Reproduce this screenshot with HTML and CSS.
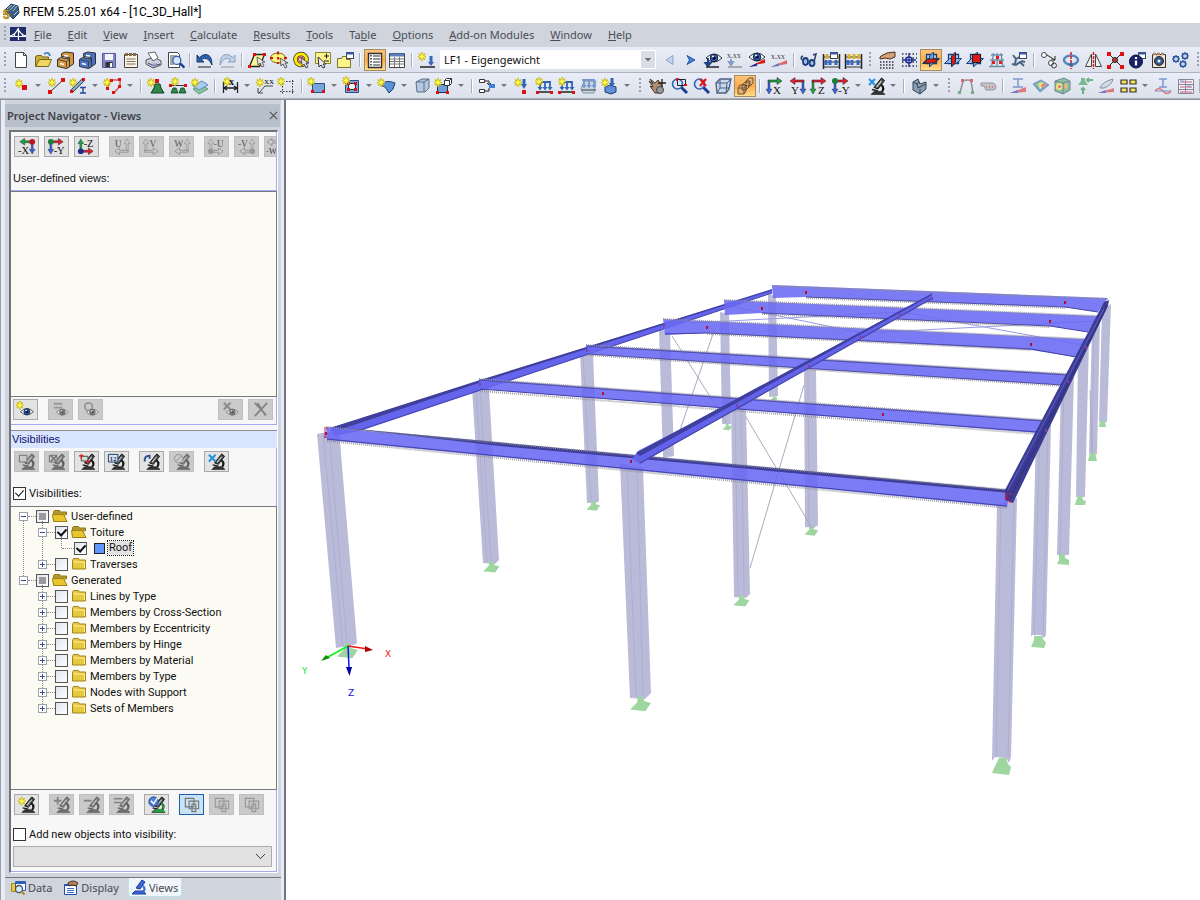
FILE: index.html
```html
<!DOCTYPE html>
<html lang="en">
<head>
<meta charset="utf-8">
<title>RFEM 5.25.01 x64 - [1C_3D_Hall*]</title>
<link rel="stylesheet" href="styles.css">
</head>
<body>
<svg class="defs" aria-hidden="true">
  <defs>
    <g id="star"><path d="M4 0v9M0 4.500h8M1 1.500l6 6M7 1.500l-6 6" stroke="#cdbd10" stroke-width="1.500"/><path d="M4 1.500l1 2 2 1-2 1-1 2-1-2-2-1 2-1z" fill="#ffff58"/></g>
    <g id="ar-r"><path d="M3 4h9V1.500l5 3.500-5 3.500V6H3z" stroke="#222" stroke-width=".5"/></g>
    <g id="ar-l"><path d="M17 4H8V1.500L3 5l5 3.500V6h9z" stroke="#222" stroke-width=".5"/></g>
    <g id="ar-dl"><path d="M3 5v8H1l3 5 3-5H5V5z" stroke="#222" stroke-width=".4"/></g>
    <g id="ar-dr"><path d="M15 5v8h-2l3 5 3-5h-2V5z" stroke="#222" stroke-width=".4"/></g>
    <g id="ar-ul"><path d="M3 15V7H1l3-5 3 5H5v8z" stroke="#222" stroke-width=".4"/></g>
    <g id="ar-ur"><path d="M15 15V7h-2l3-5 3 5h-2v8z" stroke="#222" stroke-width=".4"/></g>
    <g id="mic"><path d="M8 11.500L15.500 2l3 2.500L12 13z" fill="#4a4a4a" stroke="#151515"/><path d="M10.500 11l5-6" stroke="#d0d0d0" stroke-width="1.200"/><path d="M15 8.500q4 3.500 1 7" stroke="#151515" stroke-width="2.200"/><path d="M6 13.500l6 1.500" stroke="#222" stroke-width="1.500"/><path d="M5 18.500l3-3h8l3 3z" fill="#333" stroke="#151515" stroke-width=".6"/></g>
    <g id="eye"><path d="M2 11q8-8 16 0-8 8-16 0z" fill="#fff" stroke="#333"/><circle cx="10" cy="11" r="3.800" fill="#2b5bb8" stroke="#123"/><circle cx="10" cy="11" r="1.600" fill="#001"/><circle cx="9" cy="9.500" r="1" fill="#fff"/></g>
    <g id="lens"><path d="M12 11l6 6" stroke="#1b3f96" stroke-width="3"/><circle cx="8.500" cy="8" r="5" fill="#d8e6fb" stroke="#3560b0" stroke-width="1.600"/></g>
    <g id="win"><rect x="11.500" y="2.500" width="7" height="6" fill="#fff" stroke="#445"/><path d="M11 3.500h8" stroke="#3a5aa8" stroke-width="2"/></g>
    <g id="loads"><path d="M4 6h13M6 6v6M11 6v6M16 6v6" stroke="#3264b4" stroke-width="1.800"/><path d="M3.500 11h5L6 14.500zM8.500 11h5L11 14.500zM13.500 11h5L16 14.500z" fill="#3264b4"/><path d="M3 16h15" stroke="#222" stroke-width="1.500"/></g>
    <g id="folder"><path d="M1.500 3.500l1-2h5l1 1.500h6v9h-13z" fill="#e8c93e" stroke="#a08420"/><path d="M2.500 5h11v6" stroke="#fff2a0"/></g>
    <g id="folder-open"><path d="M1.500 11.500v-9l1-1h5l1 1.500h6v3" fill="#b39a2c" stroke="#8d7418"/><path d="M1.500 12.500L.5 5.500h11l3.500 7z" fill="#e6c52d" stroke="#9c8018"/></g>
    <g id="drawer"><path d="M2.500 9.500l3-2 9 1.500v8l-3 1.500-9-2z" stroke="#333"/><path d="M6.500 3.500l4-1.500 8 1v11l-4 2.500V7.500l-8-1z" stroke="#333"/><path d="M2.500 9.500l9 2v6M11.500 11.500l3-2.500" stroke="#333" stroke-width=".8"/><path d="M5 13.500l4 1M9 5.500l4 .6" stroke="#fff" stroke-width="1.500"/></g>
    <g id="abacus"><path d="M2.500 4v15M18.500 4v15" stroke="#222" stroke-width="1.500"/><path d="M2 7h17M2 12h17M2 17h17" stroke="#333"/><path d="M6 4v5M11 4v5M16 4v5" stroke="#d9b428" stroke-width="3"/><path d="M5 10v5M9 10v5M15 10v5" stroke="#3764c4" stroke-width="3"/></g>
    <g id="plane"><path d="M5.500 4.500h10v9h-10z" fill="#b9d4f2" stroke="#1b3e78" stroke-width="1.300"/><path d="M1.500 13.500l5-5h12l-5 5z" fill="#8ab6e4" stroke="#1b3e78"/><path d="M8.500 6l4-4v11l-4 4z" fill="#6da3da" stroke="#1b3e78"/></g>
    <g id="rects"><path d="M3.500 3.500h9v9h-9zM7.500 6.500h10v8h-10zM10.500 9.500h4v8h-4z" stroke="#77776f" stroke-width="1.200"/></g>
    <g id="gear"><circle r="3.200" stroke="#31589c" stroke-width="1.800" fill="#c3d7f3"/><path d="M0-5v10M-5 0H5M-3.500-3.500l7 7M3.500-3.500l-7 7" stroke="#31589c" stroke-width="1.500" stroke-dasharray="1.500 7"/></g>
    <g id="support"><path d="M-3-8h6l2 5 7 2-6 9-17-2 6-6 2-2z" fill="#9fd69f"/></g>
  </defs>
</svg>

<header class="titlebar">
  <svg class="logo" viewBox="0 0 18 18"><path d="M3 7l6-6 7 2 1 7-6 6z" fill="#3c5f80" stroke="#24405c"/><path d="M5 6l5-4M8 7l5-5M11 8l4-5M12 12l4-4" stroke="#a9c3d8"/><text x="1" y="16" class="five">5</text></svg>
  <h1>RFEM 5.25.01 x64 - [1C_3D_Hall*]</h1>
</header>

<nav class="menubar">
  <i class="grip"></i>
  <svg class="appicon" viewBox="0 0 16 14"><path d="M0 0h16v14H0z" fill="#202c6a"/><path d="M0 9.500h16M8.500 1v12M0 9q5-1 8-7 3 6 8 7M4.500 6.500v3M12.500 6.500v3" stroke="#fff" stroke-width="1.200"/></svg>
  <a href="#"><u>F</u>ile</a><a href="#"><u>E</u>dit</a><a href="#"><u>V</u>iew</a><a href="#"><u>I</u>nsert</a><a href="#"><u>C</u>alculate</a><a href="#"><u>R</u>esults</a><a href="#"><u>T</u>ools</a><a href="#">Ta<u>b</u>le</a><a href="#"><u>O</u>ptions</a><a href="#"><u>A</u>dd-on Modules</a><a href="#"><u>W</u>indow</a><a href="#"><u>H</u>elp</a>
</nav>

<div class="toolbar">
  <i class="grip"></i>
  <button class="tool" aria-label="New"><svg viewBox="0 0 20 20"><path d="M4.500 2.500h8l3 3v12h-11z" fill="#fff" stroke="#444"/><path d="M12.500 2.500v3h3" stroke="#444"/></svg></button>
  <button class="tool" aria-label="Open"><svg viewBox="0 0 20 20"><path d="M2.500 16V6.500l2-1h4l1 1.500h6v2" fill="#c9ad3c" stroke="#7a641c"/><path d="M2.500 16.500l4-7h12l-3 7z" fill="#f0d661" stroke="#7a641c"/><path d="M11 4q5-3 6 2" stroke="#4f88c0" stroke-width="2"/></svg></button>
  <button class="tool" aria-label="Open project"><svg viewBox="0 0 20 20"><use href="#drawer" fill="#d9963f"/></svg></button>
  <button class="tool" aria-label="Project manager"><svg viewBox="0 0 20 20"><use href="#drawer" fill="#4a72c4"/></svg></button>
  <button class="tool" aria-label="Save"><svg viewBox="0 0 20 20"><path d="M3.500 3.500h13v14h-13z" fill="#8386c4" stroke="#55589a"/><path d="M6 4h8v6H6z" fill="#f4f4fc"/><path d="M6.500 12h7v5h-7z" fill="#333"/><path d="M11 13h2v4h-2z" fill="#fff"/></svg></button>
  <button class="tool" aria-label="Notes"><svg viewBox="0 0 20 20"><path d="M3.500 4.500h13v13h-13z" fill="#fdf3dc" stroke="#444"/><path d="M4 4.500h12" stroke="#8a6a48" stroke-width="3" stroke-dasharray="3 1"/><path d="M5.500 9h9M5.500 11.500h9M5.500 14h9" stroke="#777"/></svg></button>
  <button class="tool" aria-label="Print"><svg viewBox="0 0 20 20"><path d="M3 10l8-3 7 4v4l-8 3-7-4z" fill="#ccd0dc" stroke="#555"/><path d="M5 3l7-1 3 6-5 3z" fill="#fff" stroke="#666"/><path d="M5 13l6 3 6-2" stroke="#444"/><path d="M9 14l5-1v2l-4 2z" fill="#88a0d8"/></svg></button>
  <button class="tool" aria-label="Print preview"><svg viewBox="0 0 20 20"><path d="M3.500 2.500h9l2 2v13h-11z" fill="#fff" stroke="#444"/><path d="M5 6h7M5 8h5M5 10h4M5 12h3M5 14h4" stroke="#555"/><use href="#lens" transform="translate(5 4) scale(.8)"/></svg></button>
  <i class="sep"></i>
  <button class="tool" aria-label="Undo"><svg viewBox="0 0 20 20"><path d="M2 5v7h7l-3-2.500q7-4 11 5.500Q17 4 10 4.500 7 5 4.500 7.500z" fill="#2d5fae" stroke="#163a70"/><path d="M3 17h13" stroke="#222"/></svg></button>
  <button class="tool" aria-label="Redo"><svg viewBox="0 0 20 20"><path d="M18 5v7h-7l3-2.500Q7 5.500 3 15 3 4 10 4.500q3 .5 5.500 3z" fill="#c1d3e8" stroke="#8ba0bb"/><path d="M4 17h13" stroke="#999"/></svg></button>
  <i class="sep"></i>
  <button class="tool" aria-label="Select by polygon"><svg viewBox="0 0 20 20"><path d="M2.500 16.500l5-12h10l-5 12z" fill="#fbf39a" stroke="#222" stroke-width="1.300"/><path d="M1 15h3v3H1zM6 3h3v3H6zM16 3h3v3h-3z" fill="#e01010"/><path d="M10 7l1 8 2-2 2 4 2-1-2-4h3z" fill="#e8e8e8" stroke="#444" stroke-width=".8"/></svg></button>
  <button class="tool" aria-label="Select by ellipse"><svg viewBox="0 0 20 20"><ellipse cx="9" cy="8" rx="7.500" ry="5" fill="#fdf480" stroke="#776c20"/><path d="M9 1.500v3M9 7v2.500M9 12v2M1 8h3M15 8h3" stroke="#e01010" stroke-width="2"/><path d="M11 8l1 8 2-2 2 4 2-1-2-4h3z" fill="#ddd" stroke="#444" stroke-width=".8"/></svg></button>
  <button class="tool" aria-label="Select by ring"><svg viewBox="0 0 20 20"><circle cx="10" cy="9.500" r="5.500" stroke="#333" stroke-width="4.500"/><circle cx="10" cy="9.500" r="5.500" stroke="#ffe800" stroke-width="3"/><circle cx="10" cy="9.500" r="2.500" stroke="#e01010"/><path d="M10 8l1 8 2-2 2 4 2-1-2-4h3z" fill="#ddd" stroke="#333" stroke-width=".8"/></svg></button>
  <button class="tool" aria-label="Special selection"><svg viewBox="0 0 20 20"><path d="M2.500 2.500h15v11h-15z" fill="#fdf48a" stroke="#8a8430"/><path d="M11 6h5M13.500 3.500v5M11 11h5" stroke="#222"/><path d="M5 7l1 10 2-2 2 3 2-1-2-3h3z" fill="#eee" stroke="#333"/></svg></button>
  <button class="tool" aria-label="New window"><svg viewBox="0 0 20 20"><path d="M2.500 8.500h4l1-2h4v3h4v8h-13z" fill="#fdf48a" stroke="#777430"/><use href="#win"/></svg></button>
  <i class="sep"></i>
  <button class="tool on" aria-label="Navigator" aria-pressed="true"><svg viewBox="0 0 20 20"><path d="M3.500 3.500h13v14h-13z" fill="#fff" stroke="#333" stroke-width="1.400"/><path d="M6 5v11" stroke="#333" stroke-width="1.500" stroke-dasharray="1.500 1.500"/><path d="M8 6h7M8 9h7M8 12h7M8 15h7" stroke="#333" stroke-width="1.200"/></svg></button>
  <button class="tool" aria-label="Tables"><svg viewBox="0 0 20 20"><path d="M2.500 3.500h15v14h-15z" fill="#fff" stroke="#444"/><path d="M3 5h14" stroke="#5b7fbd" stroke-width="3"/><path d="M3 9h14M3 11.500h14M3 14h14M7.500 7v10M12.500 7v10" stroke="#777"/></svg></button>
  <i class="sep"></i>
  <button class="tool" aria-label="New load case"><svg viewBox="0 0 20 20"><use href="#star" x="1" y="2"/><path d="M14 6v7" stroke="#3568b8" stroke-width="3"/><path d="M11 12h6l-3 4z" fill="#3568b8"/><path d="M3 17h15" stroke="#222" stroke-width="1.500"/></svg></button>
  <select class="loadcase" aria-label="Load case"><option>LF1 - Eigengewicht</option></select>
  <button class="tool" aria-label="Previous"><svg viewBox="0 0 20 20"><path d="M14 5.500v9L7 10z" fill="#c6d4ea" stroke="#8ba3cc"/></svg></button>
  <button class="tool" aria-label="Next"><svg viewBox="0 0 20 20"><path d="M6 5.500L14 10l-8 4.500 2.500-4.500z" fill="#4a80d0" stroke="#2356a8"/></svg></button>
  <button class="tool" aria-label="Show loads"><svg viewBox="0 0 20 20"><use href="#eye" transform="translate(1 -3)"/><path d="M5 8v6M2.500 13l2.500 3 2.500-3z" stroke="#1b3f8a" stroke-width="2"/><path d="M3 17h13" stroke="#222" stroke-width="1.500"/></svg></button>
  <button class="tool off" aria-label="Load values"><svg viewBox="0 0 20 20"><text x="2" y="8" class="t8">x.xx</text><path d="M6 9v4M4 12l2 3 2-3z" stroke="#4a6ab0" stroke-width="2"/><path d="M3 17h14" stroke="#222"/></svg></button>
  <button class="tool" aria-label="Show results"><svg viewBox="0 0 20 20"><path d="M2 17l16-8v4l-6 1z" fill="#e01818"/><path d="M2 17l8-4v3z" fill="#1b2fa8"/><use href="#eye" transform="translate(0 -4)"/></svg></button>
  <button class="tool off" aria-label="Result values"><svg viewBox="0 0 20 20"><text x="2" y="9" class="t8">x.xx</text><path d="M2 17l16-7v4l-6 1z" fill="#e01818"/><path d="M2 17l8-4v3z" fill="#1b2fa8"/></svg></button>
  <i class="sep"></i>
  <button class="tool" aria-label="Results glasses"><svg viewBox="0 0 20 20"><ellipse cx="6.500" cy="11.500" rx="2.500" ry="3.500" stroke="#1b3d80" stroke-width="1.800" fill="#a9c0e4"/><ellipse cx="13" cy="13" rx="2.500" ry="3" stroke="#1b3d80" stroke-width="1.800" fill="#a9c0e4"/><path d="M3 10Q1 7 4 6M15 12l2-8-3 1" stroke="#27406e" stroke-width="1.500"/></svg></button>
  <button class="tool" aria-label="Calculation parameters"><svg viewBox="0 0 20 20"><use href="#abacus"/><use href="#win" x="-2"/></svg></button>
  <button class="tool" aria-label="Calculate all"><svg viewBox="0 0 20 20"><use href="#abacus"/></svg></button>
  <i class="grip next"></i>
  <button class="tool" aria-label="Work plane"><svg viewBox="0 0 20 20"><path d="M4 6l6-3 8-1v5l-5 2-5-1-5 1V7z" fill="#d6a077" stroke="#4a3020"/><path d="M3 12h15M3 15h15M3 18h15" stroke="#333" stroke-width="1.300" stroke-dasharray="1.500 1.500"/></svg></button>
  <button class="tool" aria-label="Grid"><svg viewBox="0 0 20 20"><path d="M3 4h15M3 8h15M3 12h15M3 16h15" stroke="#333" stroke-width="1.500" stroke-dasharray="1.500 2"/><circle cx="10" cy="10" r="3" fill="#fff" stroke="#1c2c90" stroke-width="1.500"/><path d="M10 3v14M3 10h14" stroke="#1c2c90" stroke-width="1.300"/></svg></button>
  <button class="tool on" aria-label="Plane XY" aria-pressed="true"><svg viewBox="0 0 20 20"><use href="#plane"/><path d="M3 13l4-4h10l-4 4z" fill="#e01818" stroke="#222" stroke-width=".8"/></svg></button>
  <button class="tool" aria-label="Plane YZ"><svg viewBox="0 0 20 20"><use href="#plane"/><path d="M8.500 7l4-4v9l-4 4z" fill="#e01818" stroke="#222" stroke-width=".8"/></svg></button>
  <button class="tool" aria-label="Plane XZ"><svg viewBox="0 0 20 20"><use href="#plane"/><path d="M7.500 4.500h8v8h-8z" fill="#e01818" stroke="#222"/></svg></button>
  <button class="tool" aria-label="Guidelines"><svg viewBox="0 0 20 20"><path d="M6.500 3l-2 14M10 3v14M14 3l2 14M4 5h12M3 10h14M2 16.500h16" stroke="#6c90a8" stroke-width="1.300"/><path d="M9 6h3v3H9zM5 11h3v3H5zM12 11h3v3h-3z" fill="#e02020"/></svg></button>
  <button class="tool" aria-label="Background layers"><svg viewBox="0 0 20 20"><path d="M4 5l3 4 4-2M7 9l-1 5M3 14l4 1 4-3 4 4M12 11l4 1" stroke="#4a6488" stroke-width="2"/><use href="#win" x="-1"/></svg></button>
  <i class="sep"></i>
  <button class="tool" aria-label="Move"><svg viewBox="0 0 20 20"><circle cx="5" cy="5" r="2.500" stroke="#444" fill="#fff"/><path d="M8 5l8 5M16 6v4h-4" stroke="#222"/><circle cx="12" cy="13" r="2.500" stroke="#444" fill="#fff"/><circle cx="15" cy="15.500" r="2.500" stroke="#444"/></svg></button>
  <button class="tool" aria-label="Rotate"><svg viewBox="0 0 20 20"><ellipse cx="10" cy="10" rx="7" ry="4.500" stroke="#5a84b8" stroke-width="2.500"/><path d="M10 2v17" stroke="#e01818" stroke-width="1.500" stroke-dasharray="3 1"/><path d="M11 12l-4 3 5 2z" fill="#35689e"/></svg></button>
  <button class="tool" aria-label="Mirror"><svg viewBox="0 0 20 20"><path d="M8.500 4v12.500h-6zM12.500 4v12.500h6z" stroke="#444" fill="#eee"/><path d="M10.500 2v17" stroke="#e01818" stroke-width="1.500" stroke-dasharray="3 1"/></svg></button>
  <button class="tool" aria-label="Scale"><svg viewBox="0 0 20 20"><path d="M4 4l12 12M16 4L4 16" stroke="#222"/><circle cx="10" cy="10" r="2.500" fill="#b33" stroke="#222"/><path d="M2 2h4v4H2zM15 2h4v4h-4zM2 15h4v4H2zM15 15h4v4h-4z" fill="#e01010"/></svg></button>
  <button class="tool" aria-label="Info"><svg viewBox="0 0 20 20"><use href="#win"/><circle cx="9" cy="11.500" r="6.500" fill="#18246a" stroke="#080c30"/><path d="M9 7v2M9 10.500v5" stroke="#fff" stroke-width="2.200"/></svg></button>
  <button class="tool" aria-label="Camera"><svg viewBox="0 0 20 20"><path d="M3.500 4.500h13v13h-13z" fill="#f4e5cf" stroke="#333"/><path d="M4 4h12" stroke="#a98a68" stroke-width="2.500" stroke-dasharray="3 1"/><circle cx="10" cy="11" r="4.500" fill="#31588a" stroke="#223"/><circle cx="10" cy="11" r="1.500" fill="#fff"/></svg></button>
  <button class="tool" aria-label="Settings"><svg viewBox="0 0 20 20"><use href="#gear" transform="translate(5 9) scale(.8)"/><use href="#gear" transform="translate(14 6) scale(.8)"/><use href="#gear" transform="translate(12 14) scale(.8)"/></svg></button>
  <i class="grip next"></i>
</div>

<div class="toolbar">
  <i class="grip"></i>
  <button class="tool split" aria-label="Node"><svg viewBox="0 0 20 20"><use href="#star" x="4" y="3"/><path d="M11 9h5v5h-5z" fill="#d81010"/></svg></button>
  <button class="tool" aria-label="Line"><svg viewBox="0 0 20 20"><path d="M4 16L17 4" stroke="#333"/><path d="M2 14h4v4H2zM15 2h4v4h-4z" fill="#e01010"/><use href="#star" x="2" y="2"/></svg></button>
  <button class="tool split" aria-label="Member"><svg viewBox="0 0 20 20"><path d="M4 15L15 4" stroke="#333" stroke-width="3.500"/><path d="M4 15L15 4" stroke="#8ab4e4" stroke-width="2"/><path d="M2 14h3v3H2zM14 2h3v3h-3z" fill="#e01010"/><use href="#star" x="1" y="2"/><path d="M12 11.500h6M15 11v6M12 17h6" stroke="#234a98" stroke-width="1.400"/></svg></button>
  <button class="tool split" aria-label="Polyline"><svg viewBox="0 0 20 20"><path d="M4 12l4-8h9v6l-6 7" stroke="#e05050" stroke-width="1.500"/><path d="M7 3h3v3H7zM15 2h3v3h-3zM3 11h3v3H3zM15 9h3v3h-3zM9 15h3v3H9z" fill="#e01010"/><use href="#star" x="0" y="2"/></svg></button>
  <i class="sep"></i>
  <button class="tool" aria-label="Nodal support"><svg viewBox="0 0 20 20"><path d="M9 8h5l1 4 3 5H5l3-5z" fill="#2f8a4a" stroke="#124020"/><path d="M9 3h4v4H9z" fill="#e01010"/><use href="#star" x="1" y="2"/></svg></button>
  <button class="tool" aria-label="Line support"><svg viewBox="0 0 20 20"><path d="M3 9.500h15" stroke="#333"/><path d="M5 12h3l2 5H3zM13 12h3l2 5h-7z" fill="#2f8a4a" stroke="#124020" stroke-width=".8"/><path d="M1 8h3v3H1zM16 8h3v3h-3z" fill="#e01010"/><use href="#star" x="3" y="1"/></svg></button>
  <button class="tool" aria-label="Surface support"><svg viewBox="0 0 20 20"><path d="M3 13l6 5 9-5-6-4z" fill="#85c69a" stroke="#6a9a80"/><path d="M3 10l6 4 9-5-6-4z" fill="#a9cdf0" stroke="#5d89b8"/><use href="#star" x="1" y="2"/></svg></button>
  <i class="sep"></i>
  <button class="tool split" aria-label="Dimension"><svg viewBox="0 0 20 20"><path d="M3.500 6v11M17.500 6v11M4 12h13M7 10l-3 2 3 2M14 10l3 2-3 2" stroke="#222" stroke-width="1.300"/><use href="#star" x="3" y="1"/><text x="9" y="9" class="t10 dk">x</text></svg></button>
  <button class="tool" aria-label="Comment"><svg viewBox="0 0 20 20"><path d="M18 10h-8l-6 7M3 12v5h5" stroke="#444"/><use href="#star" x="1" y="2"/><text x="9" y="8" class="t7">XX</text></svg></button>
  <button class="tool" aria-label="Section box"><svg viewBox="0 0 20 20"><path d="M5.500 4v14M15.500 4v14M3 5.500h15M3 15.500h15" stroke="#333" stroke-dasharray="1.500 1.500"/><use href="#star" x="0" y="1"/></svg></button>
  <i class="sep"></i>
  <button class="tool split" aria-label="Surface"><svg viewBox="0 0 20 20"><path d="M5.500 7.500h12v9h-12z" fill="#78a5da" stroke="#2b4f80"/><path d="M4 14h3v3H4zM15 14h3v3h-3z" fill="#e01010"/><use href="#star" x="0" y="1"/></svg></button>
  <button class="tool split" aria-label="Opening"><svg viewBox="0 0 20 20"><path d="M3.500 4.500h13v12h-13z" fill="#78a5da" stroke="#2b4f80"/><path d="M6.500 7.500h7v6h-7z" fill="#eef" stroke="#333"/><path d="M5 6h3v3H5zM12 6h3v3h-3zM5 12h3v3H5zM12 12h3v3h-3z" fill="#d01818"/><use href="#star" x="0" y="0"/></svg></button>
  <button class="tool split" aria-label="Curved surface"><svg viewBox="0 0 20 20"><path d="M4 9q5-6 14-2-1 7-6 10Q9 10 4 9z" fill="#5b95d8" stroke="#20406e"/><use href="#star" x="0" y="2"/></svg></button>
  <button class="tool" aria-label="Solid"><svg viewBox="0 0 20 20"><path d="M4 6l6-3h7v9l-4 4H5z" fill="#b5c8e0" stroke="#5b7088"/><path d="M4 6h8l5-3M12 6v10" stroke="#5b7088"/></svg></button>
  <button class="tool split" aria-label="Copy solid"><svg viewBox="0 0 20 20"><path d="M3.500 8.500h10v8h-10z" fill="#6f9fd8" stroke="#234"/><path d="M10.500 4.500h5v5h-5zM10.500 4.500l2-2h5v5l-2 2M15.500 4.500l2-2" fill="#fff" stroke="#333"/><path d="M2 15h3v3H2zM12 15h3v3h-3z" fill="#e01010"/><use href="#star" x="0" y="2"/></svg></button>
  <i class="sep"></i>
  <button class="tool split" aria-label="Connect"><svg viewBox="0 0 20 20"><path d="M2.500 3.500h5v3h-5zM2.500 13.500h5v3h-5z" fill="#fff" stroke="#333"/><path d="M8 5h4v3M8 15h4v-3M10 7l2 2 2-2" stroke="#222"/><path d="M12 8h6v4h-6z" fill="#3f82d8"/></svg></button>
  <button class="tool" aria-label="Nodal load"><svg viewBox="0 0 20 20"><path d="M12 3v6" stroke="#3264b4" stroke-width="3"/><path d="M9 8h6l-3 5z" fill="#3264b4"/><path d="M10 14h4v4h-4z" fill="#e01010"/><use href="#star" x="2" y="2"/></svg></button>
  <button class="tool" aria-label="Line load"><svg viewBox="0 0 20 20"><use href="#loads"/><path d="M2 15h3v3H2zM16 15h3v3h-3z" fill="#e01010"/><use href="#star" x="1" y="1"/></svg></button>
  <button class="tool" aria-label="Member load"><svg viewBox="0 0 20 20"><use href="#loads"/><path d="M2 15h3v3H2zM16 15h3v3h-3z" fill="#e01010"/><use href="#star" x="2" y="1"/></svg></button>
  <button class="tool off" aria-label="Surface load"><svg viewBox="0 0 20 20"><path d="M3 13l3-8h12l-2 12H5z" fill="#b4ccdc" stroke="#467"/><use href="#loads" y="-2"/></svg></button>
  <button class="tool split" aria-label="Solid load"><svg viewBox="0 0 20 20"><path d="M5 11l5-2 6 2v5l-5 2-6-2z" fill="#5f8fd4" stroke="#1c3c70"/><path d="M12 2v6" stroke="#3264b4" stroke-width="3"/><path d="M9 7h6l-3 4z" fill="#3264b4"/><use href="#star" x="1" y="2"/></svg></button>
  <i class="grip next"></i>
  <button class="tool" aria-label="Pan"><svg viewBox="0 0 20 20"><path d="M3 3l5 4 3-3 4 6-2 7H8l-5-7 3 1-4-6 4 3z" fill="#b08c72" stroke="#4a3828"/><path d="M11 7h8M15 3v8" stroke="#222" stroke-width="1.300"/><circle cx="13" cy="14" r="3.500" fill="#999" stroke="#444"/></svg></button>
  <button class="tool" aria-label="Zoom window"><svg viewBox="0 0 20 20"><use href="#lens"/><path d="M8.500 3.500h8v6h-8z" stroke="#222"/><path d="M7 2h2v3H7zM15 8h3v2h-3z" fill="#e01010"/></svg></button>
  <button class="tool" aria-label="Zoom all"><svg viewBox="0 0 20 20"><use href="#lens"/><path d="M9 3l6 7M15 3l-6 7" stroke="#e01818" stroke-width="2.200"/></svg></button>
  <button class="tool" aria-label="Wireframe"><svg viewBox="0 0 20 20"><path d="M3 7l4-4h11l-2 10-3 4H4z" fill="#c8d8ee" stroke="#4c6280" stroke-width="1.300"/><path d="M3 7h11l4-4M14 7l-1 10M7 3v9h9M7 12l-3 5" stroke="#4c6280"/></svg></button>
  <button class="tool on" aria-label="Solid display" aria-pressed="true"><svg viewBox="0 0 20 20"><path d="M11 5l3-3h4v5l-3 3h-4zM7 9l3-3h4v5l-3 3H7zM3 12l2-3h6v6l-2 3H3z" fill="#f2b264" stroke="#665540"/><path d="M3 12h6v6M9 12l2-3M7 9h4v5M11 5h4v5" stroke="#665540"/></svg></button>
  <i class="sep"></i>
  <button class="tool" aria-label="View X"><svg viewBox="0 0 20 20"><use href="#ar-dl" fill="#3a62e0"/><use href="#ar-r" fill="#20a040"/><text x="8" y="18" class="t11">X</text></svg></button>
  <button class="tool" aria-label="View Y"><svg viewBox="0 0 20 20"><use href="#ar-dr" fill="#3a62e0"/><use href="#ar-l" fill="#e02030"/><text x="4" y="18" class="t11">Y</text></svg></button>
  <button class="tool" aria-label="View Z"><svg viewBox="0 0 20 20"><use href="#ar-dl" fill="#20a040"/><use href="#ar-r" fill="#e02030"/><text x="9" y="18" class="t11">Z</text></svg></button>
  <button class="tool split" aria-label="View -Y"><svg viewBox="0 0 20 20"><use href="#ar-dl" fill="#3a62e0"/><use href="#ar-r" fill="#e02030"/><circle cx="4" cy="5" r="3" fill="#18803a"/><text x="7" y="18" class="t11">-Y</text></svg></button>
  <button class="tool split" aria-label="Visibility mode"><svg viewBox="0 0 20 20"><use href="#mic"/><path d="M3 3l6 6M9 3L3 9" stroke="#2590e0" stroke-width="2"/></svg></button>
  <i class="sep"></i>
  <button class="tool split" aria-label="Render"><svg viewBox="0 0 20 20"><path d="M4 6l5-3 2 5 6-2v7l-6 5-7-4z" fill="#8a9db0" stroke="#34465a"/><path d="M4 6l4 2 1 4 8-4M8 8l2-2M11 13v5" stroke="#34465a"/></svg></button>
  <i class="grip next"></i>
  <button class="tool dim" aria-label="Deformation"><svg viewBox="0 0 20 20"><path d="M4 17L7 5q5-2 8 0l2 12" stroke="#555" stroke-width="1.500"/><path d="M5 3h3v3H5zM14 3h3v3h-3z" fill="#d01818"/><path d="M2 15h3v3H2zM15 15h3v3h-3z" fill="#2a8a3c"/></svg></button>
  <button class="tool dim" aria-label="Tape"><svg viewBox="0 0 20 20"><path d="M3 7h12q3 1 3 4t-3 3H8L6 10H3z" fill="#aaa" stroke="#666"/><path d="M8 11h1M11 11h1M14 11h1" stroke="#e03030" stroke-width="2"/></svg></button>
  <i class="sep"></i>
  <button class="tool dim" aria-label="Member results"><svg viewBox="0 0 20 20"><path d="M5 3h10M10 3v8M5 11h10" stroke="#3c64b0" stroke-width="1.500"/><path d="M2 17l16-6v5z" fill="#e03030"/><path d="M2 17l8-3v3z" fill="#2038b0"/></svg></button>
  <button class="tool dim" aria-label="Surface results"><svg viewBox="0 0 20 20"><path d="M3 8l8-4 8 5-9 7z" fill="#3070d0" stroke="#3060a0"/><path d="M5 8l6-3 6 4-7 5z" fill="#40b060"/><path d="M8 8l4-2 4 3-6 4z" fill="#f0e040"/><path d="M11 9l3-2 2 2-4 3z" fill="#e84020"/></svg></button>
  <button class="tool dim" aria-label="Solid results"><svg viewBox="0 0 20 20"><path d="M3 5l9-3 6 3v9l-7 4-8-3z" fill="#50a860" stroke="#246"/><circle cx="7.500" cy="10.500" r="3.500" fill="#f0e040"/><circle cx="7.500" cy="10.500" r="1.500" fill="#e03020"/><ellipse cx="14" cy="10" rx="1.500" ry="3" fill="#f0a030"/><path d="M3 5l8 2 7-2M11 7v11" stroke="#246"/></svg></button>
  <button class="tool dim" aria-label="Support reactions"><svg viewBox="0 0 20 20"><path d="M7 2h4v3l3 4H4l3-4z" fill="#3a9a50"/><path d="M13 4h6M15 2l-2 2 2 2M9 18v-6M7 14l2-2 2 2" stroke="#2f8a4a" stroke-width="2"/></svg></button>
  <button class="tool dim" aria-label="Sections"><svg viewBox="0 0 20 20"><path d="M4 12q2-6 13-9-1 6-9 9z" fill="#c8d4e4" stroke="#456"/><path d="M2 17l16-5v4z" fill="#e03030"/><path d="M2 17l8-3v3z" fill="#2038b0"/></svg></button>
  <button class="tool split" aria-label="Values"><svg viewBox="0 0 20 20"><path d="M3 4h6v4H3zM12 4h6v4h-6zM3 12h6v4H3zM12 12h6v4h-6z" fill="#f6e25a" stroke="#333" stroke-width="1.200"/></svg></button>
  <button class="tool dim" aria-label="Diagrams"><svg viewBox="0 0 20 20"><path d="M6 3h8M10 3v8M6 11h8" stroke="#3c64b0" stroke-width="1.500"/><path d="M2 15q4-5 8 0t8 0" stroke="#e03030" stroke-width="1.500"/><path d="M2 15h16" stroke="#35a"/></svg></button>
  <button class="tool dim" aria-label="Result table"><svg viewBox="0 0 20 20"><path d="M3.500 3.500h15v14h-15zM3.500 8.500h15M3.500 13.500h15M10.500 3.500v14" stroke="#446" fill="#fff"/><path d="M5 6h12M5 11h12M5 16h12" stroke="#d05070" stroke-width="1.500"/><path d="M5 5h4M12 10h4" stroke="#4068c0"/></svg></button>
  <i class="sep"></i>
</div>

<div class="workspace">
  <aside class="navigator">
    <div class="nav-title"><h2>Project Navigator - Views</h2><button class="close" aria-label="Close"><svg viewBox="0 0 10 10"><path d="M1 1l8 8M9 1L1 9" stroke="#555" stroke-width="1.300"/></svg></button></div>
    <div class="nav-body">
      <section class="group views">
        <div class="btnrow first">
          <button class="box" aria-label="View -X"><svg viewBox="0 0 20 20"><use href="#ar-dr" fill="#3a62e0"/><use href="#ar-l" fill="#20a040"/><circle cx="16" cy="5" r="3" fill="#c01020"/><text x="1" y="18" class="t11">-X</text></svg></button>
          <button class="box" aria-label="View -Y"><svg viewBox="0 0 20 20"><use href="#ar-dl" fill="#3a62e0"/><use href="#ar-r" fill="#e02030"/><circle cx="4" cy="5" r="3" fill="#18803a"/><text x="7" y="18" class="t11">-Y</text></svg></button>
          <button class="box" aria-label="View -Z"><svg viewBox="0 0 20 20"><use href="#ar-ul" fill="#20a040"/><use href="#ar-r" y="10" fill="#e02030"/><circle cx="4" cy="15" r="3" fill="#1a2c90"/><text x="7" y="10" class="t11">-Z</text></svg></button>
          <button class="box gap" disabled aria-label="View U"><svg viewBox="0 0 20 20"><use href="#ar-ur" fill="#ccc"/><use href="#ar-l" y="10" fill="#ccc"/><text x="3" y="10" class="t10">U</text></svg></button>
          <button class="box" disabled aria-label="View V"><svg viewBox="0 0 20 20"><use href="#ar-ul" fill="#ccc"/><use href="#ar-r" y="10" fill="#ccc"/><text x="8" y="10" class="t10">V</text></svg></button>
          <button class="box" disabled aria-label="View W"><svg viewBox="0 0 20 20"><use href="#ar-ur" fill="#ccc"/><use href="#ar-l" y="10" fill="#ccc"/><text x="2" y="10" class="t10">W</text></svg></button>
          <button class="box gap" disabled aria-label="View -U"><svg viewBox="0 0 20 20"><use href="#ar-ul" fill="#ccc"/><use href="#ar-r" y="10" fill="#ccc"/><circle cx="4" cy="15" r="3" fill="#777"/><text x="7" y="10" class="t10">-U</text></svg></button>
          <button class="box" disabled aria-label="View -V"><svg viewBox="0 0 20 20"><use href="#ar-ur" fill="#ccc"/><use href="#ar-l" y="10" fill="#ccc"/><circle cx="16" cy="15" r="3" fill="#777"/><text x="1" y="10" class="t10">-V</text></svg></button>
          <button class="box cut" disabled aria-label="View -W"><svg viewBox="0 0 12 19"><path d="M12 4H7V1.500L2 5l5 3.500V6h5" fill="#ccc" stroke="#222" stroke-width=".5"/><text x="1" y="17" class="t8">-W</text></svg></button>
        </div>
        <p class="label arial">User-defined views:</p>
      </section>
      <div class="list"></div>
      <div class="btnrow under">
        <button class="box" aria-label="New view"><svg viewBox="0 0 20 20"><use href="#eye" transform="translate(3 3) scale(.85)"/><use href="#star" x="0" y="1"/></svg></button>
        <button class="box gap" disabled aria-label="Set view"><svg viewBox="0 0 20 20"><path d="M3 4h9M3 8h9" stroke="#777" stroke-width="2"/><use href="#eye" transform="translate(4 4) scale(.8)"/></svg></button>
        <button class="box" disabled aria-label="Update view"><svg viewBox="0 0 20 20"><circle cx="8" cy="7" r="4" stroke="#777" stroke-width="2"/><use href="#eye" transform="translate(4 4) scale(.8)"/></svg></button>
        <button class="box right" disabled aria-label="Delete view"><svg viewBox="0 0 20 20"><path d="M3 3l7 7M10 3l-7 7" stroke="#666" stroke-width="2.200"/><use href="#eye" transform="translate(4 4) scale(.8)"/></svg></button>
        <button class="box" disabled aria-label="Delete all"><svg viewBox="0 0 20 20"><path d="M4 3l12 13M17 3L4 17M7 3l8 13" stroke="#555" stroke-width="1.800"/></svg></button>
      </div>
      <h3>Visibilities</h3>
      <section class="group vis">
        <div class="btnrow">
          <button class="box" disabled aria-label="By selection"><svg viewBox="0 0 20 20"><use href="#mic"/><path d="M2.500 3.500h8v7h-8z" fill="#ccc" stroke="#333"/></svg></button>
          <button class="box" disabled aria-label="Hide selection"><svg viewBox="0 0 20 20"><use href="#mic"/><path d="M2.500 3.500h8v7h-8z" fill="#ccc" stroke="#333"/><path d="M4 4l6 6M10 4l-6 6" stroke="#333" stroke-width="1.500"/></svg></button>
          <button class="box" aria-label="By window"><svg viewBox="0 0 20 20"><use href="#mic"/><path d="M4.500 4.500h7v5h-7z" fill="#cdd" stroke="#444"/><path d="M2 4h5M4.500 2v5M9 10h5M11.500 8v4" stroke="#e01818" stroke-width="1.300"/></svg></button>
          <button class="box" aria-label="By number"><svg viewBox="0 0 20 20"><use href="#mic"/><path d="M1.500 2.500h10v8h-10z" fill="#d4e4f8" stroke="#123c68"/><text x="3" y="9" class="t7">12</text></svg></button>
          <button class="box gap" aria-label="Previous visibility"><svg viewBox="0 0 20 20"><use href="#mic"/><path d="M3 10q-1-6 5-6v3" stroke="#33508c" stroke-width="2"/></svg></button>
          <button class="box" disabled aria-label="Invert"><svg viewBox="0 0 20 20"><use href="#mic"/><circle cx="7" cy="7" r="4.500" fill="#ccc" stroke="#666"/><path d="M4 10l6-6" stroke="#666"/></svg></button>
          <button class="box gap" aria-label="Cancel visibility"><svg viewBox="0 0 20 20"><use href="#mic"/><path d="M2 3l7 7M9 3l-7 7" stroke="#2590e0" stroke-width="2.200"/></svg></button>
        </div>
        <label class="check"><input type="checkbox" checked class="flat">Visibilities:</label>
      </section>
      <ul class="tree">
        <li><div class="row"><button class="exp" aria-label="Collapse"></button><i class="dots"></i><label><input type="checkbox" class="part"><svg class="fold" viewBox="0 0 16 14"><use href="#folder-open"/></svg><span>User-defined</span></label></div>
          <ul>
            <li><div class="row"><button class="exp" aria-label="Collapse"></button><i class="dots"></i><label><input type="checkbox" checked><svg class="fold" viewBox="0 0 16 14"><use href="#folder-open"/></svg><span>Toiture</span></label></div>
              <ul class="leafs"><li><div class="row"><i class="dots long"></i><label><input type="checkbox" checked><i class="swatch"></i><span class="focus">Roof</span></label></div></li></ul></li>
            <li><div class="row"><button class="exp plus" aria-label="Expand"></button><i class="dots"></i><label><input type="checkbox"><svg class="fold" viewBox="0 0 16 14"><use href="#folder"/></svg><span>Traverses</span></label></div></li>
          </ul></li>
        <li><div class="row"><button class="exp" aria-label="Collapse"></button><i class="dots"></i><label><input type="checkbox" class="part"><svg class="fold" viewBox="0 0 16 14"><use href="#folder-open"/></svg><span>Generated</span></label></div>
          <ul>
            <li><div class="row"><button class="exp plus" aria-label="Expand"></button><i class="dots"></i><label><input type="checkbox"><svg class="fold" viewBox="0 0 16 14"><use href="#folder"/></svg><span>Lines by Type</span></label></div></li>
            <li><div class="row"><button class="exp plus" aria-label="Expand"></button><i class="dots"></i><label><input type="checkbox"><svg class="fold" viewBox="0 0 16 14"><use href="#folder"/></svg><span>Members by Cross-Section</span></label></div></li>
            <li><div class="row"><button class="exp plus" aria-label="Expand"></button><i class="dots"></i><label><input type="checkbox"><svg class="fold" viewBox="0 0 16 14"><use href="#folder"/></svg><span>Members by Eccentricity</span></label></div></li>
            <li><div class="row"><button class="exp plus" aria-label="Expand"></button><i class="dots"></i><label><input type="checkbox"><svg class="fold" viewBox="0 0 16 14"><use href="#folder"/></svg><span>Members by Hinge</span></label></div></li>
            <li><div class="row"><button class="exp plus" aria-label="Expand"></button><i class="dots"></i><label><input type="checkbox"><svg class="fold" viewBox="0 0 16 14"><use href="#folder"/></svg><span>Members by Material</span></label></div></li>
            <li><div class="row"><button class="exp plus" aria-label="Expand"></button><i class="dots"></i><label><input type="checkbox"><svg class="fold" viewBox="0 0 16 14"><use href="#folder"/></svg><span>Members by Type</span></label></div></li>
            <li><div class="row"><button class="exp plus" aria-label="Expand"></button><i class="dots"></i><label><input type="checkbox"><svg class="fold" viewBox="0 0 16 14"><use href="#folder"/></svg><span>Nodes with Support</span></label></div></li>
            <li><div class="row"><button class="exp plus" aria-label="Expand"></button><i class="dots"></i><label><input type="checkbox"><svg class="fold" viewBox="0 0 16 14"><use href="#folder"/></svg><span>Sets of Members</span></label></div></li>
          </ul></li>
      </ul>
      <section class="group foot">
        <div class="btnrow">
          <button class="box" aria-label="New visibility"><svg viewBox="0 0 20 20"><use href="#mic"/><use href="#star" x="1" y="2"/></svg></button>
          <button class="box gap" disabled aria-label="Add to visibility"><svg viewBox="0 0 20 20"><use href="#mic"/><path d="M2 6h8M6 2v8" stroke="#555" stroke-width="2"/></svg></button>
          <button class="box" disabled aria-label="Remove from visibility"><svg viewBox="0 0 20 20"><use href="#mic"/><path d="M2 6h8" stroke="#555" stroke-width="2"/></svg></button>
          <button class="box" disabled aria-label="Replace visibility"><svg viewBox="0 0 20 20"><use href="#mic"/><path d="M2 4h9M2 8h8" stroke="#555" stroke-width="1.600"/></svg></button>
          <button class="box gap" aria-label="Colors"><svg viewBox="0 0 20 20"><use href="#mic"/><path d="M8 17.500l2-2h6l2 2zM15 8.500q3 3 2 6" fill="#20a040" stroke="#20a040" stroke-width="1.500"/><circle cx="7" cy="7" r="5" fill="#4d82d8" stroke="#1c3f80"/><path d="M4 6l3 3 4-6" stroke="#fff" stroke-width="1.500"/></svg></button>
          <button class="box gap sel" aria-label="Union"><svg viewBox="0 0 20 20"><use href="#rects"/></svg></button>
          <button class="box" disabled aria-label="Intersection"><svg viewBox="0 0 20 20"><use href="#rects"/></svg></button>
          <button class="box" disabled aria-label="Difference"><svg viewBox="0 0 20 20"><use href="#rects"/></svg></button>
        </div>
        <label class="check"><input type="checkbox" class="flat">Add new objects into visibility:</label>
        <select class="target" aria-label="Visibility for new objects"><option></option></select>
      </section>
    </div>
    <div class="tabs">
      <button><svg viewBox="0 0 16 16"><path d="M1.500 3.500h5v8h-5z" fill="#f0c830" stroke="#a88410"/><path d="M5.500 1.500h10v9h-10z" fill="#fff" stroke="#2d60b8"/><path d="M5 3h11" stroke="#2d60b8" stroke-width="2"/><circle cx="9" cy="9" r="3.500" fill="#d8eafc" stroke="#456" stroke-width="1.300"/><path d="M11.500 11.500l3 3" stroke="#b58020" stroke-width="2"/></svg>Data</button>
      <button><svg viewBox="0 0 16 16"><path d="M1.500 4.500h12v10h-12z" fill="#fff" stroke="#2350b0"/><path d="M2 5h12" stroke="#2350b0" stroke-width="2"/><path d="M4 8.500h7M4 10.500h7M4 12.500h7" stroke="#3c6cc0"/><path d="M5 3q5-4 10 0l-2 3-4-1-3 1z" fill="#b08058" stroke="#4a3020"/></svg>Display</button>
      <button class="cur"><svg viewBox="0 0 16 16"><path d="M5 9l6-8 3 2-5 7zM1 15l3-3h8l3 3z" fill="#3a68d8" stroke="#1c3c9c"/><path d="M12 7q3 3 0 6" stroke="#3a68d8" stroke-width="2"/></svg>Views</button>
    </div>
  </aside>
  <main class="viewport">
    <svg viewBox="286 100 914 800" preserveAspectRatio="xMinYMin meet" role="img" aria-label="3D hall model">
      <g class="cols">
        <path d="M317 434L339 430 357 643 354 645 336 648z"/><path d="M472 388L489 389 499 560 495 564 483 563z"/><path d="M580 353L593 354 599 501 596 503 587 503z"/><path d="M659 329L670 332 674 456 663 458z"/><path d="M720 312L729 314 731 424 722 424z"/><path d="M768 293L776 297 778 396 769 397z"/>
        <path d="M620 463L643 468 651 693 645 699 630 698z"/><path d="M731 405L746 410 750 594 746 598 734 597z"/><path d="M804 368L816 370 818 525 814 528 805 527z"/>
        <path d="M997 504L1017 498 1011 757 1009 763 1006 758 995 757 992 761z"/><path d="M1036 432L1051 425 1046 635 1044 638 1041 635 1032 635 1031 637z"/><path d="M1061 384L1074 375 1069 555 1057 555z"/><path d="M1078 352L1089 340 1085 497 1076 497z"/><path d="M1092 325L1100 318 1097 454 1089 454z"/><path d="M1102 310L1111 304 1107 422 1099 422z"/>
      </g>
      <path class="ribs" d="M323 433L343 646M329 432L347 644M476 389L487 562M480 389L491 562M627 466L636 696M637 467L643 696M735 408L738 596M741 410L744 595M1001 504L996 757M1014 500L1008 757M1040 432L1034 635M1048 428L1043 635M1064 384L1060 555M1094 325L1092 454M583 355L591 502M808 370L809 526"/>
      <g>
        <use href="#support" transform="translate(347 651) scale(.9)"/><use href="#support" transform="translate(491 567) scale(.7)"/><use href="#support" transform="translate(593 506) scale(.6)"/><use href="#support" transform="translate(640 704) scale(.9)"/><use href="#support" transform="translate(741 601) scale(.7)"/><use href="#support" transform="translate(811 531) scale(.6)"/><use href="#support" transform="translate(727 427) scale(.4)"/><use href="#support" transform="translate(774 398) scale(.3)"/>
      </g>
      <path class="feet" d="M999 758h7l2 6 3 3-2 8-17-2 4-9zM1034 636h8l1 3 3 4-2 5-13-1 3-7zM1059 554h6v4l4 2v5l-12-1 2-4zM1078 496h4l1 4 3 1-1 4h-10l1-4zM1090 453h5l1 3 1 5h-9l1-4zM1100 421h5l1 6h-7z"/>
      <path class="brace" d="M672 336L726 422M714 331L680 430M746 417L812 528M804 385L750 568M1090 390L1092 452"/>
      <path class="roofbrace" d="M725 305L862 333M690 323L902 312L1083 345M863 333L1098 321"/>
      <path d="M330 428L772 289V293L360 431 334 436z" fill="#6464ec"/><path d="M330 428L480 380 772 289.500V290.500L480 382.500 336 431z" fill="#40409c"/><path d="M360 430L772 293" stroke="#4848ac"/>
      <g class="beams">
        <path d="M772 285L1108 298 1098 312 1065 307 806 297 773 298z"/><path d="M724 300L1098 316 1088 332 1050 326 762 313 725 315z"/><path d="M663 319L1086 339 1076 357 1031 350 707 333 665 335z"/><path d="M586 345L1068 374 1062 385 587 354z"/><path d="M479 379L1044 420 1037 433 480 389z"/><path d="M326 427L1010 490 1007 507 327 440z"/>
      </g>
      <path d="M335 427L1010 490V493L500 446z" fill="#3e3e9a"/><path class="edge" d="M327 439L1007 506M480 389L1037 432M587 354L1062 385M707 333L1031 349 1076 357M665 334L707 333M762 313L1050 326 1088 332M806 297L1065 307 1098 312M479 380L1044 421M586 346L1068 375"/>
      <path class="stitch" d="M326 427L1010 490M327 441L1007 508M479 379L1044 420M480 391L1037 434M586 345L1068 374M587 355L1062 386M663 319L1086 339M707 334L1031 350M724 300L1098 316M762 314L1050 327M772 286L1108 299M806 298L1065 308"/>
      <path d="M632 459L638 451 690 424 932 293.500 932 298.500 690 435 640 464z" fill="#6262ea"/><path d="M636 453L690 424 932 293.500V295L690 428.500 640 456z" fill="#3f3f9e"/><path d="M640 463L690 435 932 298.500" stroke="#4343a2" stroke-width="1.200"/>
      <path d="M1005 490L1104 302 1109 300 1108 306 1013 503 1005 500z" fill="#3b3b92"/><path d="M1008 490L1104 309" stroke="#5858c0" stroke-width="1.200"/><path d="M1010 498L1107 306" stroke="#30307c"/>
      <path class="pins" d="M603 392v3M631 460v3M707 326v3M762 307v3M806 291v3M883 413v3M1031 343v3M1050 320v3M1065 301v3"/>
      <path class="pins faint" d="M480 383v3M587 349v3M664 324v3M737 404v3M809 365v3M861 336v3M900 314v3M932 297v3M1046 429v3M1068 380v3M1086 346v3"/>
      <path class="corner" d="M325 429v9M324 428h4M324 437h3M1006 492v8M1010 494h3M1009 502h4"/><path class="pins" d="M326 432v3M1008 497v3"/>
      <path d="M348 646L368 649" stroke="#ff1010" stroke-width="1.500"/><path d="M365 646l8 4-8 2z" fill="#b00000"/>
      <path d="M348 646L328 657" stroke="#10f010" stroke-width="1.500"/><path d="M321 661l5-6 4 3z" fill="#009000"/>
      <path d="M348 646L349 668" stroke="#1010ff" stroke-width="1.500"/><path d="M346 667h6l-2.500 9z" fill="#0000a0"/>
      <text class="axis" x="385" y="657" fill="#f02020">X</text><text class="axis" x="302" y="674" fill="#18e018">Y</text><text class="axis" x="348" y="696" fill="#1010d0">Z</text>
    </svg>
  </main>
</div>
</body>
</html>
```
FILE: styles.css
```css
* { box-sizing: border-box; }
body { margin: 0; height: 100vh; display: flex; flex-direction: column; overflow: hidden; background: #cfd4dd; color: #111; font-family: "Noto Sans", "Open Sans", sans-serif; font-size: 11px; }
button { padding: 0; border: 0; background: none; font: inherit; color: inherit; }
svg { fill: none; display: block; flex: none; }
h1, h2, h3, p, ul { margin: 0; padding: 0; font-weight: normal; }
ul { list-style: none; }
.defs { position: absolute; width: 0; height: 0; }

.titlebar { display: flex; align-items: center; gap: 3px; height: 23px; flex: none; padding-left: 2px; background: #fff; }
.titlebar h1 { font: 12px Roboto, sans-serif; color: #000; }
.logo { width: 18px; height: 18px; }
.five { font: bold 12px "Liberation Sans", sans-serif; fill: #f4c020; stroke: #6b4c00; stroke-width: .5px; }

.menubar { display: flex; align-items: center; height: 24px; flex: none; padding: 0 0 2px 4px; color: #4b4c55; font-size: 11px; }
.menubar a { padding: 0 8px; color: inherit; text-decoration: none; }
.appicon { width: 16px; height: 14px; }
.grip { flex: none; width: 6px; height: 16px; background: radial-gradient(circle at 1px 1px, #9ba1ad 1px, transparent 1px) 0 0 / 6px 4px; }

.toolbar { display: flex; align-items: center; height: 26px; flex: none; padding-left: 4px; overflow: hidden; background: linear-gradient(#e9edf7, #dce1eb); border-bottom: 1px solid #aeb3bd; }
.toolbar .grip.next { width: 12px; height: 16px; background-position: 5px 0; background-size: 12px 4px; }
.tool { flex: none; display: flex; align-items: center; justify-content: center; width: 22px; height: 24px; }
.tool svg { width: 20px; height: 20px; }
.tool.on { height: 22px; border: 1px solid #a88c5c; background: linear-gradient(#fbc57e, #ffab45 50%, #ffdf8e); }
.tool.off svg, .tool.dim svg { opacity: .6; }
.tool.split { width: 35px; justify-content: flex-start; padding-left: 1px; gap: 4px; }
.tool.split::after { content: ""; border: 3px solid transparent; border-top-color: #777; border-bottom: 0; }
.sep { flex: none; width: 8px; height: 14px; background: linear-gradient(90deg, transparent 3px, #a9aeb9 3px 4px, #fff 4px 5px, transparent 5px); }
.t7 { font: bold 7px "Liberation Serif", serif; fill: #333; }
.t8 { font: bold 8px "Liberation Serif", serif; fill: #222; }
.t10 { font: bold 10px "Liberation Serif", serif; fill: #444; }
.t11 { font: 11px "Liberation Serif", serif; fill: #111; }
.dk { fill: #111; }

select { appearance: none; border-radius: 0; color: #111; font: inherit; }
.loadcase { flex: none; width: 216px; height: 19px; margin: 0 2px; padding: 0 16px 0 3px; border: 1px solid #fff; background: linear-gradient(#777, #777) 204px 7px / 6px 1px no-repeat, linear-gradient(#777, #777) 205px 8px / 4px 1px no-repeat, linear-gradient(#777, #777) 206px 9px / 2px 1px no-repeat, linear-gradient(90deg, #fff 200px, #d9dde6 200px); }

.workspace { flex: 1; min-height: 0; display: flex; border-top: 1px solid #8f949e; }
.navigator { width: 286px; flex: none; display: flex; flex-direction: column; padding: 4px 4px 0 5px; border-right: 2px solid #73767e; border-left: 1px solid #9a9ea8; background: linear-gradient(90deg, #e6ebf5 4px, transparent 4px calc(100% - 3px), #e6ebf5 calc(100% - 3px)), #cfd4dd; }
.nav-title { display: flex; align-items: center; justify-content: space-between; height: 23px; flex: none; margin-left: -1px; padding: 0 0 0 2px; background: #b7bfcb; }
.nav-title h2 { font-size: 11px; font-weight: 600; color: #3f4147; }
.close { padding: 2px; }
.close svg { width: 9px; height: 9px; }
.nav-body { flex: 1; min-height: 0; display: flex; flex-direction: column; margin: 3px 2px 4px 3px; border: 1px solid #70737a; border-width: 2px 1px 1px 2px; border-right-color: #fff; border-bottom-color: #fff; background: #f7f7f7; }
.group { flex: none; border-right: 1px solid #a9a9ee; }
.views { height: 59px; border-bottom: 1px solid #a9a9ee; overflow: hidden; }
.btnrow { display: flex; align-items: center; gap: 5px; padding: 4px 0 0 3px; overflow: hidden; }
.box { flex: none; display: flex; align-items: center; justify-content: center; width: 25px; height: 21px; border: 1px solid #a9a9a9; background: #e3e3e3; }
.box svg { width: 19px; height: 19px; }
.box:disabled { border-color: #bfbfbf; background: #cacaca; }
.box:disabled svg { filter: grayscale(1); opacity: .6; }
.box.gap { margin-left: 5px; }
.box.cut { width: 13px; border-right: 0; }
.box.cut svg { width: 12px; }
.box.right { margin-left: auto; }
.box.sel { border-color: #1a5fa8; background: #c9e2f8; }
.label { padding: 13px 0 0 2px; line-height: 16px; }
.arial { font: 11px/16px "Liberation Sans", Arial, sans-serif; }
.list { flex: 0 0 206px; border: 1px solid #77797e; border-left: 0; background: #fcfbf3; }
.under { flex: none; height: 28px; padding: 0 3px 2px 2px; border-right: 1px solid #a9a9ee; border-bottom: 1px solid #a9a9ee; }
.nav-body h3 { flex: none; height: 18px; margin-top: 5px; padding-left: 1px; border-top: 1px solid #8b8d92; background: #d9e4ff; color: #10106c; font: 11px/17px "Liberation Sans", Arial, sans-serif; }
.vis { height: 58px; }
.vis .btnrow { padding-top: 3px; }
.check { display: flex; align-items: center; gap: 3px; height: 16px; margin: 13px 0 0 2px; font-family: Roboto, sans-serif; }
input[type=checkbox] { appearance: none; flex: none; width: 13px; height: 13px; margin: 0; border: 1px solid #555; background: linear-gradient(135deg, #dfe4ef, #fff); display: grid; place-items: center; }
input.flat { background: #fff; border-color: #333; }
input[type=checkbox]:checked::before { content: ""; width: 4px; height: 7px; margin-top: -2px; border: solid #111; border-width: 0 2px 2px 0; transform: rotate(42deg); }
input[type=checkbox].flat:checked::before { border-width: 0 1px 1px 0; }
input.part::before { content: ""; width: 7px; height: 7px; background: #9a9a9a; }
.tree { flex: 1; min-height: 0; overflow: hidden; padding: 1px 0 0 8px; border: 1px solid #77797e; border-left: 0; background: #fcfbf3; font-family: Roboto, sans-serif; }
.tree li { position: relative; }
.tree ul { padding-left: 19px; position: relative; }
.tree ul::before { content: ""; position: absolute; left: 23px; top: -3px; bottom: 8px; border-left: 1px dotted #888; }
.tree > li:first-child::before { content: ""; position: absolute; left: 4px; top: 8px; bottom: -8px; border-left: 1px dotted #888; }
.row { display: flex; align-items: center; height: 16px; position: relative; }
.row label { display: flex; align-items: center; }
.exp { width: 9px; height: 9px; border: 1px solid #9aa0b0; background: linear-gradient(#3b4f90, #3b4f90) center / 5px 1px no-repeat, #fff; }
.exp.plus { background: linear-gradient(#3b4f90, #3b4f90) center / 5px 1px no-repeat, linear-gradient(#3b4f90, #3b4f90) center / 1px 5px no-repeat, #fff; }
.dots { width: 8px; border-top: 1px dotted #888; }
.dots.long { width: 12px; margin-left: 5px; }
.fold { width: 16px; height: 14px; margin: 0 3px 0 3px; }
.swatch { width: 11px; height: 11px; margin: 0 2px 0 7px; border: 1px solid #222; background: #5f96ff; }
.focus { margin-left: 1px; padding: 0 1px; line-height: 14px; outline: 1px dotted #222; background: #e3e3e3; }
.foot { height: 82px; border-bottom: 1px solid #a9a9ee; }
.foot .check { margin-top: 11px; }
.target { display: block; width: calc(100% - 6px); height: 21px; margin: 4px 0 0 2px; border: 1px solid #adadad; background: #e1e1e1; background-image: linear-gradient(45deg, transparent 45%, #444 45% 60%, transparent 60%), linear-gradient(-45deg, transparent 45%, #444 45% 60%, transparent 60%); background-size: 5px 5px; background-position: right 10px center, right 6px center; background-repeat: no-repeat; }
.tabs { flex: none; display: flex; align-items: flex-start; height: 23px; margin: 0 -1px; border-top: 1px solid #777; padding-left: 3px; color: #484b54; }
.tabs button { display: flex; align-items: center; gap: 2px; height: 19px; margin-right: 6px; padding: 0 3px 0 2px; }
.tabs svg { width: 16px; height: 16px; }
.tabs .cur { border: 1px solid #b9e4ea; border-top: 0; background: #f2f6fa; border-radius: 0 0 3px 3px; }

.viewport { flex: 1; min-width: 0; background: #fff; overflow: hidden; }
.viewport svg { width: 100%; height: 100%; }
.cols { fill: #babad9; }
.ribs { stroke: #a9a9cf; opacity: .7; }
.feet { fill: #9fd69f; }
.beams { fill: #6969f4; fill-opacity: .88; }
.edge { stroke: #4242a8; stroke-width: 1px; }
.stitch { stroke: #8f8f8f; stroke-width: 2px; stroke-dasharray: 1 1; opacity: .8; }
.brace { stroke: #a9a9c0; }
.roofbrace { stroke: #9a9ae8; }
.pins { stroke: #b01030; stroke-width: 2px; }
.pins.faint { stroke: #8040a8; }
.corner { stroke: #d02050; stroke-width: 1px; }
.axis { font: 9px "DejaVu Sans", sans-serif; }
```
